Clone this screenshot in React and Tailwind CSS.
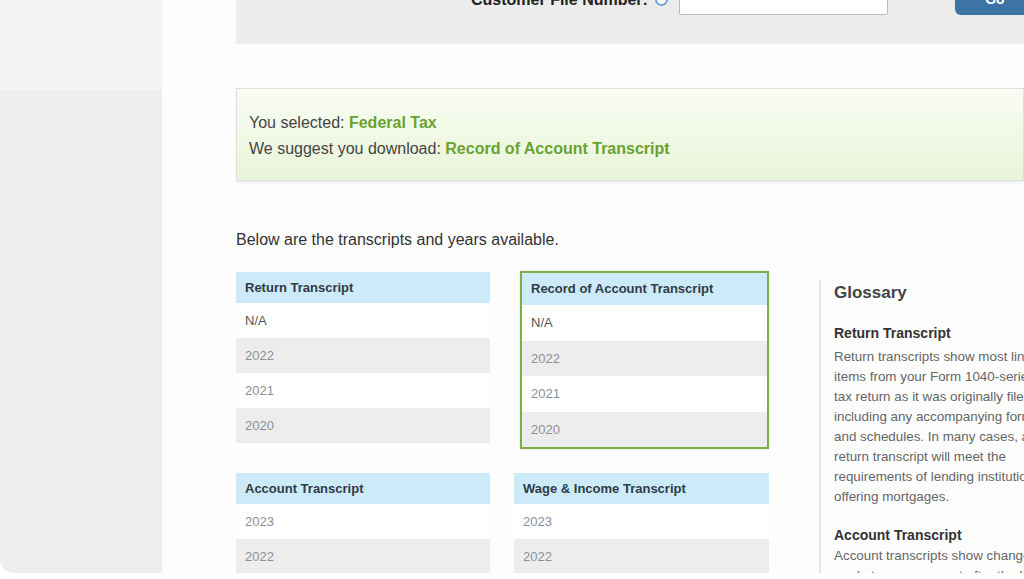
import React from "react";

const tables = [
  { title: "Return Transcript", rows: ["N/A", "2022", "2021", "2020"] },
  { title: "Record of Account Transcript", rows: ["N/A", "2022", "2021", "2020"], selected: true },
  { title: "Account Transcript", rows: ["2023", "2022"] },
  { title: "Wage & Income Transcript", rows: ["2023", "2022"] },
];

function Transcript({ title, rows, selected }) {
  return (
    <div
      className={
        selected
          ? "ml-[6px] border-2 border-[#7fae45] shadow-[0_0_2px_rgba(0,0,0,0.15)]"
          : "mt-[1px]"
      }
    >
      <div
        className={`${selected ? "h-[32px]" : "h-[31px]"} flex items-center pl-[9px] bg-[#cdeaf8] text-[13px] font-bold text-[#2e3c46]`}
      >
        {title}
      </div>
      {rows.map((r, i) => (
        <div
          key={i}
          className={`${selected ? "h-[35.5px]" : "h-[35px]"} flex items-center pl-[9px] text-[13px] ${
            i % 2 === 1 ? "bg-[#ededed]" : "bg-white"
          } ${r === "N/A" ? "text-[#555]" : "text-[#8a9096]"}`}
        >
          {r}
        </div>
      ))}
    </div>
  );
}

export default function App() {
  return (
    <div className="w-[1024px] h-[579px] bg-white overflow-hidden font-['Liberation_Sans',Arial,sans-serif]">
      <div className="flex h-[573px] rounded-bl-[14px] overflow-hidden">
        {/* left rail */}
        <aside className="w-[162px] shrink-0 flex flex-col">
          <div className="h-[91px] bg-[#f3f3f3]" />
          <div className="flex-1 bg-[#ededed]" />
        </aside>

        <main className="flex-1 bg-[#fdfdfd] pl-[74px] overflow-hidden">
          {/* top search box, scrolled mostly out of view */}
          <div className="h-[44px] bg-[#ececec] overflow-hidden border-b border-[#f2f2f2]">
            <div className="-mt-[16px] flex items-center pl-[235px]">
              <span className="shrink-0 text-[16px] font-bold text-[#222] whitespace-nowrap">Customer File Number:</span>
              <span className="shrink-0 ml-[7px] w-[13px] h-[13px] rounded-full border-2 border-[#6ea7d8] bg-white" />
              <div className="shrink-0 ml-[11px] w-[209px] h-[31px] bg-white border border-[#bcbcbc] rounded-[2px]" />
              <button className="shrink-0 ml-[67px] w-[90px] h-[30px] rounded-[6px] bg-[#3d74a6] text-white text-[14px] font-bold pr-[10px]">
                Go
              </button>
            </div>
          </div>

          {/* suggestion alert */}
          <div className="mt-[44px] h-[93px] border border-[#dedede] bg-gradient-to-b from-[#f9fdf3] to-[#e9f4d8] shadow-[0_2px_2px_rgba(0,0,0,0.06)] flex flex-col justify-center pl-[12px] pt-[2px] gap-[2px] text-[16px] leading-[24px] text-[#444]">
            <div>
              You selected: <span className="font-bold text-[#6aa230]">Federal Tax</span>
            </div>
            <div>
              We suggest you download:{" "}
              <span className="font-bold text-[#6aa230]">Record of Account Transcript</span>
            </div>
          </div>

          <p className="mt-[50px] text-[16px] leading-[18px] text-[#333]">
            Below are the transcripts and years available.
          </p>

          <div className="mt-[22px] flex items-start">
            <div className="w-[533px] shrink-0 grid grid-cols-[254px_255px] gap-x-[24px] gap-y-[23px] items-start">
              {tables.map((t) => (
                <Transcript key={t.title} {...t} />
              ))}
            </div>

            {/* glossary */}
            <div className="ml-[50px] mt-[9px] h-[400px] border-l-2 border-[#e4e4e4] pl-[13px] shrink-0">
              <h2 className="mt-[3px] text-[17px] leading-[20px] font-bold text-[#444]">Glossary</h2>
              <h3 className="mt-[19px] text-[14px] leading-[22px] font-bold text-[#333]">Return Transcript</h3>
              <p className="mt-[3px] w-[214px] text-[13.4px] leading-[20px] text-[#666]">
                Return transcripts show most line items from your Form 1040-series tax return as it was
                originally filed, including any accompanying forms and schedules. In many cases, a return
                transcript will meet the requirements of lending institutions offering mortgages.
              </p>
              <h3 className="mt-[17px] text-[14px] leading-[22px] font-bold text-[#333]">Account Transcript</h3>
              <p className="w-[214px] text-[13.4px] leading-[20px] text-[#666]">
                Account transcripts show changes made to your account after the IRS processed your original
                return.
              </p>
            </div>
          </div>
        </main>
      </div>
    </div>
  );
}
